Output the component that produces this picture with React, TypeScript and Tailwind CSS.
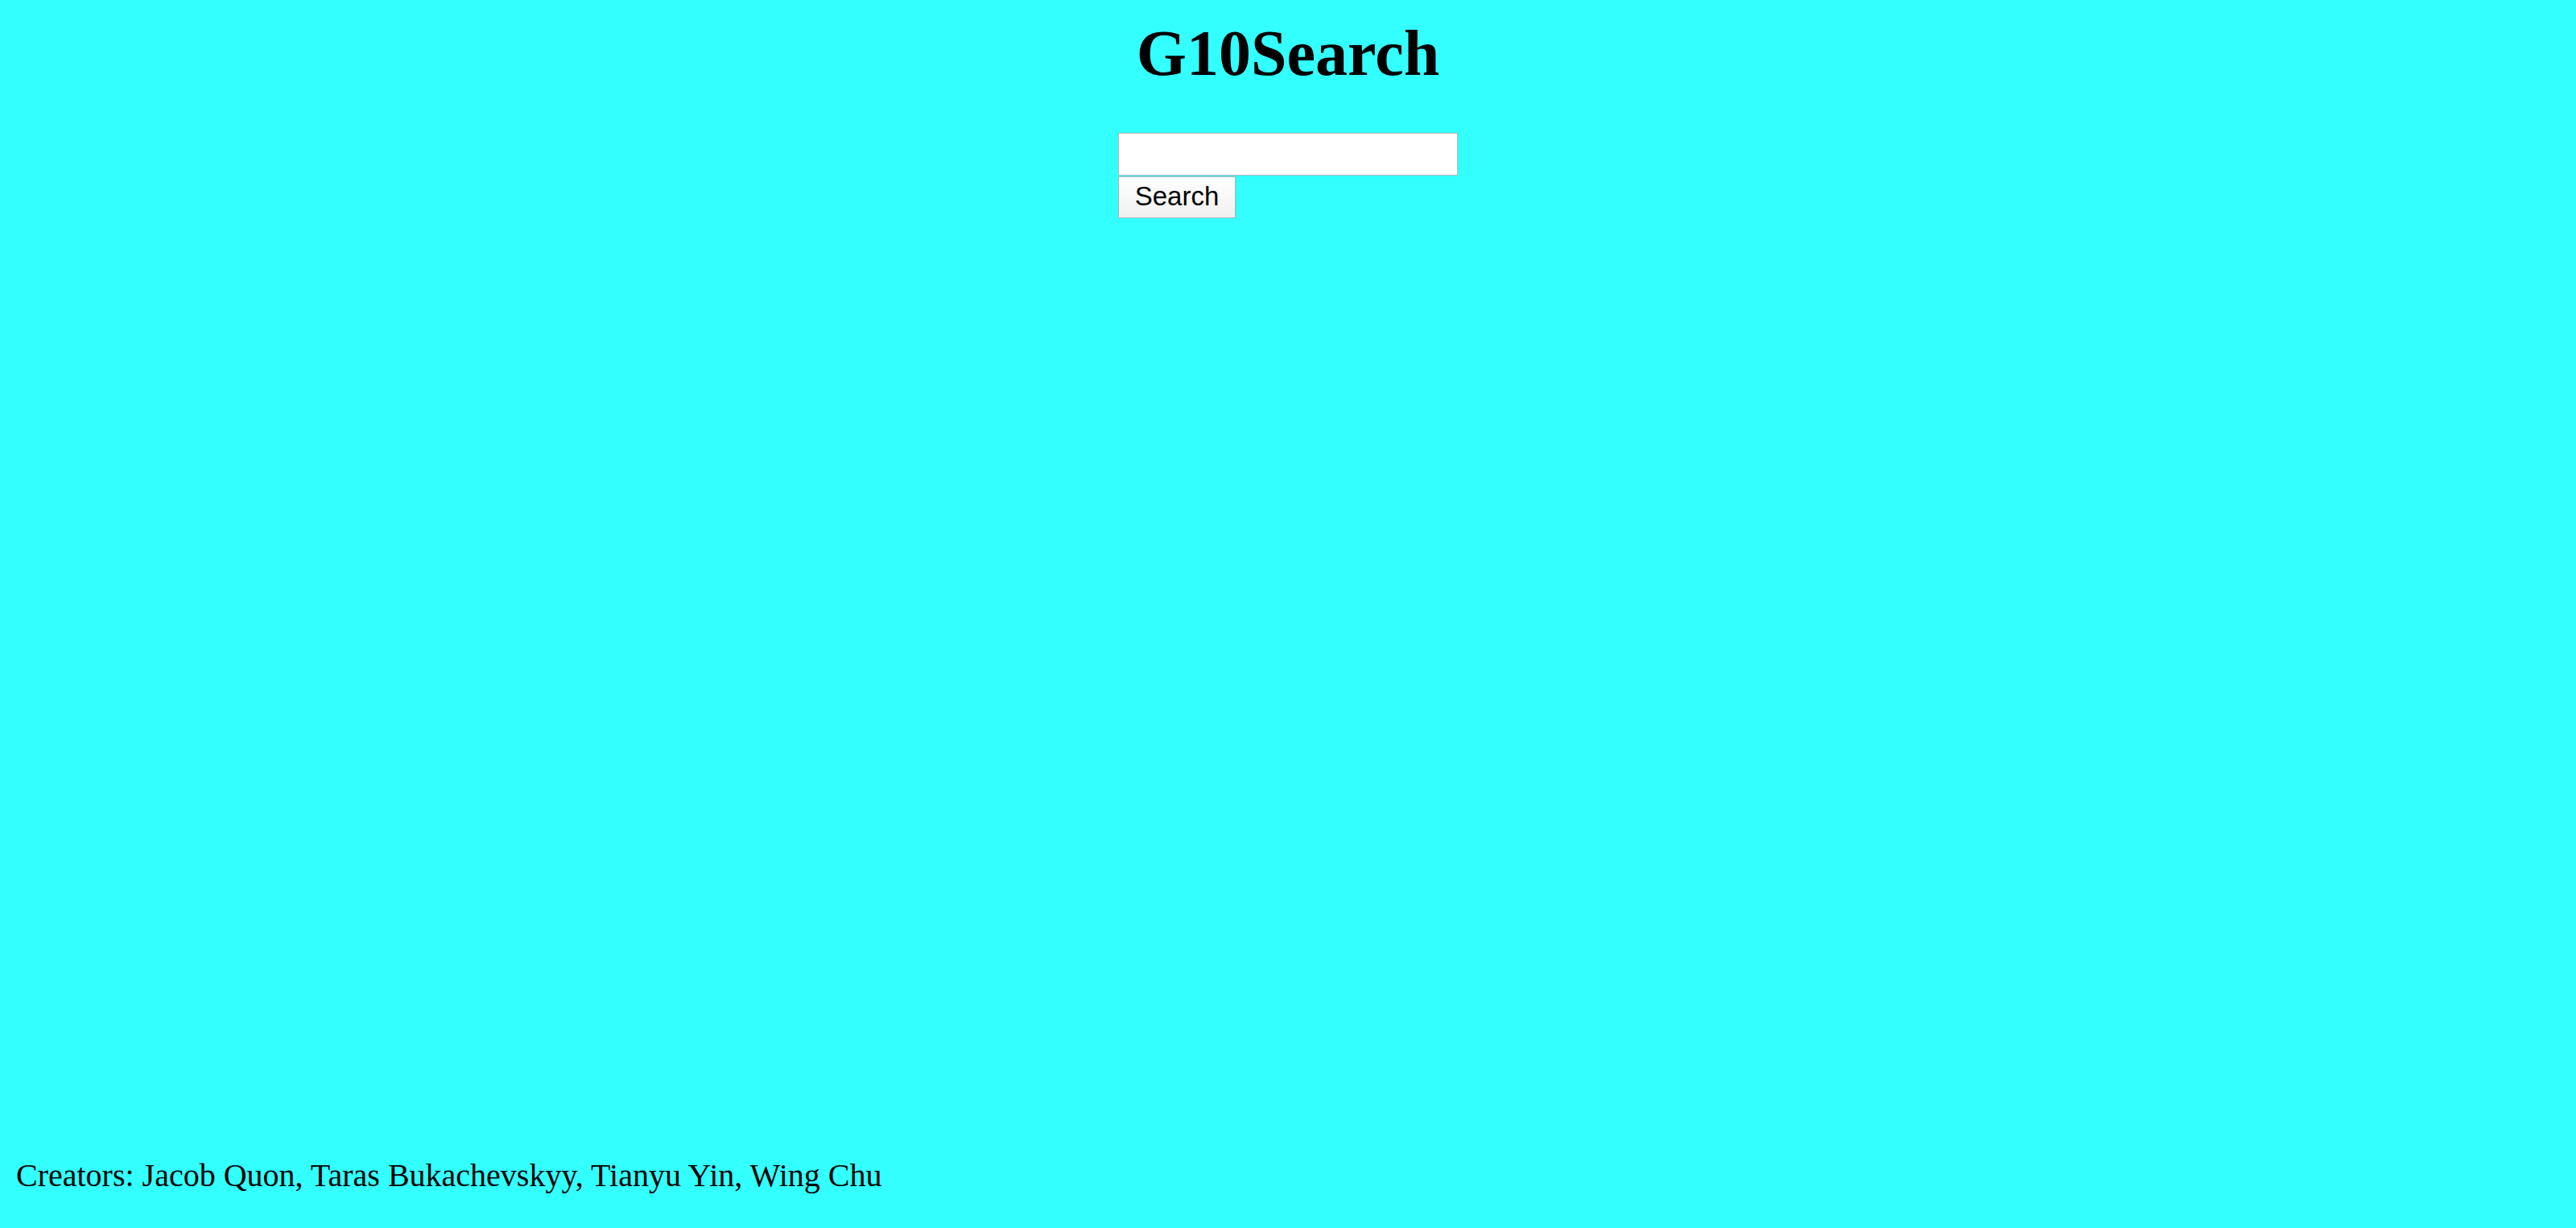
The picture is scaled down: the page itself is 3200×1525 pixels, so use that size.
export default function App() {
  return (
    <div className="flex h-screen flex-col bg-[#33ffff] text-black">
      <h1 className="pt-[22px] text-center font-['Liberation_Serif','Times_New_Roman',serif] text-[80px] font-bold leading-[88px]">
        G10Search
      </h1>
      <div className="mt-[55px] flex justify-center">
        <div className="flex w-[422px] flex-col items-start">
          <input
            type="text"
            className="h-[53px] w-[422px] border border-[#b5b5b5] bg-white px-2 font-['Liberation_Sans',Arial,sans-serif] text-[33px] outline-none"
          />
          <button className="mt-[1px] h-[52px] w-[146px] border border-[#b0b0b0] bg-gradient-to-b from-white to-[#f0f0f0] pb-[3px] font-['Liberation_Sans',Arial,sans-serif] text-[33px] leading-none text-black">
            Search
          </button>
        </div>
      </div>
      <p className="mt-auto mb-[43px] pl-[20px] font-['Liberation_Serif','Times_New_Roman',serif] text-[40px] leading-[44px]">
        Creators: Jacob Quon, Taras Bukachevskyy, Tianyu Yin, Wing Chu
      </p>
    </div>
  );
}
